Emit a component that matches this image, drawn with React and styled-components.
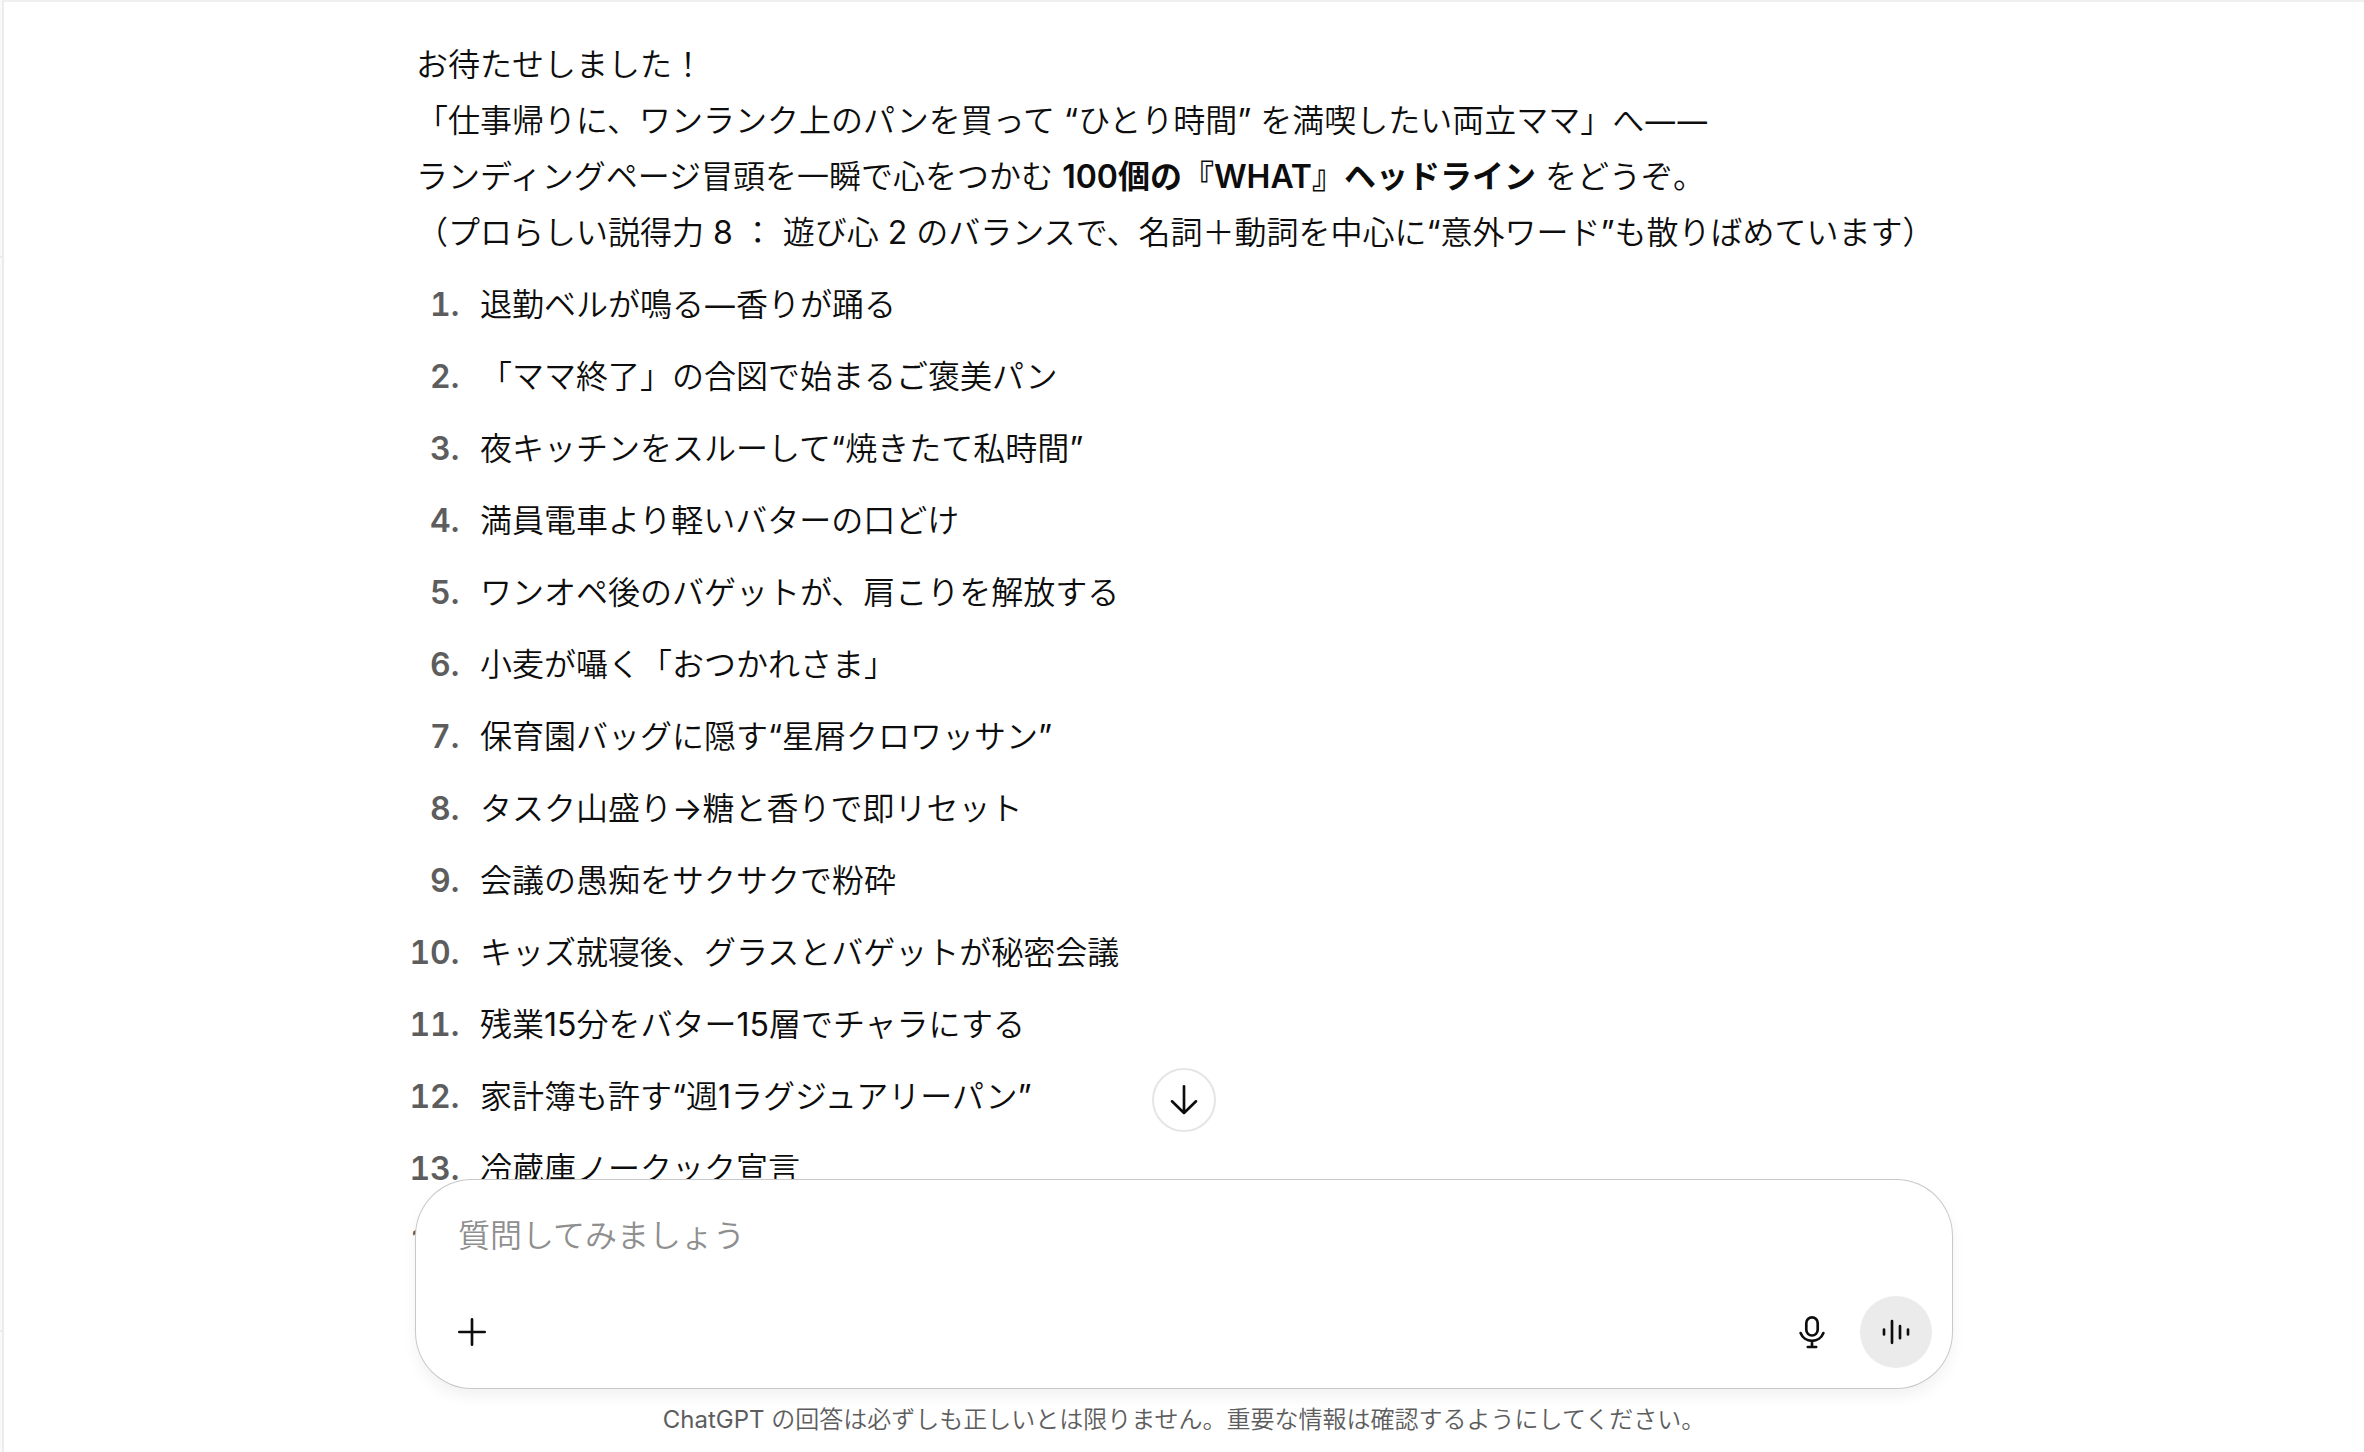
import React from "react";
import styled, { createGlobalStyle } from "styled-components";

const GlobalStyle = createGlobalStyle`
  * {
    box-sizing: border-box;
  }

  body {
    margin: 0;
    background: #fff;
    color: #0d0d0d;
    font-family: Inter, "Noto Sans CJK JP DemiLight", "Noto Sans CJK JP", sans-serif;
    font-size: 32px;
    line-height: 56px;
  }

  button,
  textarea {
    font: inherit;
    color: inherit;
  }
`;

const Layout = styled.div`
  display: flex;
  height: 100vh;
  overflow: hidden;
`;

const SidebarEdge = styled.aside`
  flex: none;
  display: flex;
  flex-direction: column;
  justify-content: space-between;
  width: 4px;
  background: #f9f9f9;
  border-right: 2px solid #ececec;
`;

const SidebarTop = styled.div`
  height: 258px;
  border-bottom: 2px solid #ececec;
`;

const SidebarBottom = styled.div`
  height: 122px;
  border-top: 2px solid #ececec;
`;

const Main = styled.main`
  flex: 1;
  min-width: 0;
  display: flex;
  flex-direction: column;
  border-top: 2px solid #f0f0f0;
`;

const Thread = styled.div`
  flex: 1;
  min-height: 0;
  overflow: hidden;
`;

const Message = styled.article`
  max-width: 1536px;
  margin: 0 auto;
  padding-top: 35px;
`;

const Intro = styled.p`
  margin: 0 0 16px;
`;

const Strong = styled.strong`
  font-family: Inter, "Noto Sans CJK JP", sans-serif;
  font-weight: 600;
`;

const Dash = styled.span`
  font-family: "Noto Sans", sans-serif;
  font-weight: 400;
  line-height: 1;
`;

const HeadlineList = styled.ol`
  margin: 0;
  padding-left: 52px;
`;

const Headline = styled.li`
  margin-bottom: 16px;
  padding-left: 12px;

  &::marker {
    color: #5d5d5d;
    font-weight: 600;
  }
`;

const Bottom = styled.div`
  position: relative;
  width: 100%;
  max-width: 1536px;
  margin: -56px auto 0;
`;

const Composer = styled.form`
  padding: 28px 20px 20px;
  background: #fff;
  border-radius: 56px;
  box-shadow: 0 0 0 1px #c8c8c8, 0 8px 16px rgba(0, 0, 0, 0.06);
`;

const Prompt = styled.textarea`
  display: block;
  width: 100%;
  height: 56px;
  margin-bottom: 32px;
  padding: 0 22px;
  border: 0;
  outline: 0;
  resize: none;
  overflow: hidden;
  background: transparent;

  &::placeholder {
    color: #8f8f8f;
    opacity: 1;
  }
`;

const Actions = styled.div`
  display: flex;
  align-items: center;
  justify-content: space-between;
`;

const ActionGroup = styled.div`
  display: flex;
  gap: 12px;
`;

const RoundButton = styled.button`
  display: flex;
  align-items: center;
  justify-content: center;
  width: 72px;
  height: 72px;
  padding: 0;
  border: 0;
  border-radius: 50%;
  background: ${({ $filled }) => ($filled ? "#ebebeb" : "transparent")};
  cursor: pointer;
`;

const ScrollButton = styled(RoundButton)`
  position: absolute;
  bottom: calc(100% + 48px);
  left: 50%;
  width: 64px;
  height: 64px;
  margin-left: -32px;
  border: 2px solid #e5e5e5;
  background: #fff;
`;

const Notice = styled.p`
  margin: 0;
  padding: 16px 0;
  color: #5d5d5d;
  font-size: 24px;
  line-height: 32px;
  text-align: center;
`;

const Svg = styled.svg`
  width: 40px;
  height: 40px;
  fill: none;
  stroke: #0d0d0d;
  stroke-width: 2.66;
  stroke-linecap: round;
  stroke-linejoin: round;
`;

const Icon = ({ children }) => (
  <Svg viewBox="0 0 40 40" aria-hidden="true">
    {children}
  </Svg>
);

const headlines = [
  <>
    退勤ベルが鳴る<Dash>—</Dash>香りが踊る
  </>,
  "「ママ終了」の合図で始まるご褒美パン",
  "夜キッチンをスルーして“焼きたて私時間”",
  "満員電車より軽いバターの口どけ",
  "ワンオペ後のバゲットが、肩こりを解放する",
  "小麦が囁く「おつかれさま」",
  "保育園バッグに隠す“星屑クロワッサン”",
  "タスク山盛り→糖と香りで即リセット",
  "会議の愚痴をサクサクで粉砕",
  "キッズ就寝後、グラスとバゲットが秘密会議",
  "残業15分をバター15層でチャラにする",
  "家計簿も許す“週1ラグジュアリーパン”",
  "冷蔵庫ノークック宣言",
  "",
];

export default function App() {
  return (
    <Layout lang="ja">
      <GlobalStyle />
      <SidebarEdge>
        <SidebarTop />
        <SidebarBottom />
      </SidebarEdge>
      <Main>
        <Thread>
          <Message>
            <Intro>
              お待たせしました！
              <br />
              「仕事帰りに、ワンランク上のパンを買って “ひとり時間”
              を満喫したい両立ママ」へ<Dash>——</Dash>
              <br />
              ランディングページ冒頭を一瞬で心をつかむ{" "}
              <Strong>100個の『WHAT』ヘッドライン</Strong> をどうぞ。
              <br />
              （プロらしい説得力 8 ： 遊び心 2
              のバランスで、名詞＋動詞を中心に“意外ワード”も散りばめています）
            </Intro>
            <HeadlineList>
              {headlines.map((text, i) => (
                <Headline key={i}>{text}</Headline>
              ))}
            </HeadlineList>
          </Message>
        </Thread>

        <Bottom>
          <ScrollButton type="button" aria-label="一番下へ移動">
            <Icon>
              <path d="M20 6.3V33M8 21.3L20 33L32 21.3" />
            </Icon>
          </ScrollButton>
          <Composer onSubmit={(e) => e.preventDefault()}>
            <Prompt
              rows={1}
              aria-label="質問"
              placeholder="質問してみましょう"
            />
            <Actions>
              <RoundButton type="button" aria-label="追加">
                <Icon>
                  <path d="M20 7.3V32.7M7.3 20H32.7" />
                </Icon>
              </RoundButton>
              <ActionGroup>
                <RoundButton type="button" aria-label="音声入力">
                  <Icon>
                    <rect x="14.3" y="5.3" width="11.4" height="18.2" rx="5.7" />
                    <path d="M8.6 21A12.2 12.2 0 0 0 31.4 21M20 29.8V35M15.8 35H24.2" />
                  </Icon>
                </RoundButton>
                <RoundButton type="button" $filled aria-label="音声モード">
                  <Icon>
                    <path d="M8 17.5V22.5M16 9V30.8M24 14.2V26.2M32 17.5V22.5" />
                  </Icon>
                </RoundButton>
              </ActionGroup>
            </Actions>
          </Composer>
          <Notice>
            ChatGPT
            の回答は必ずしも正しいとは限りません。重要な情報は確認するようにしてください。
          </Notice>
        </Bottom>
      </Main>
    </Layout>
  );
}
